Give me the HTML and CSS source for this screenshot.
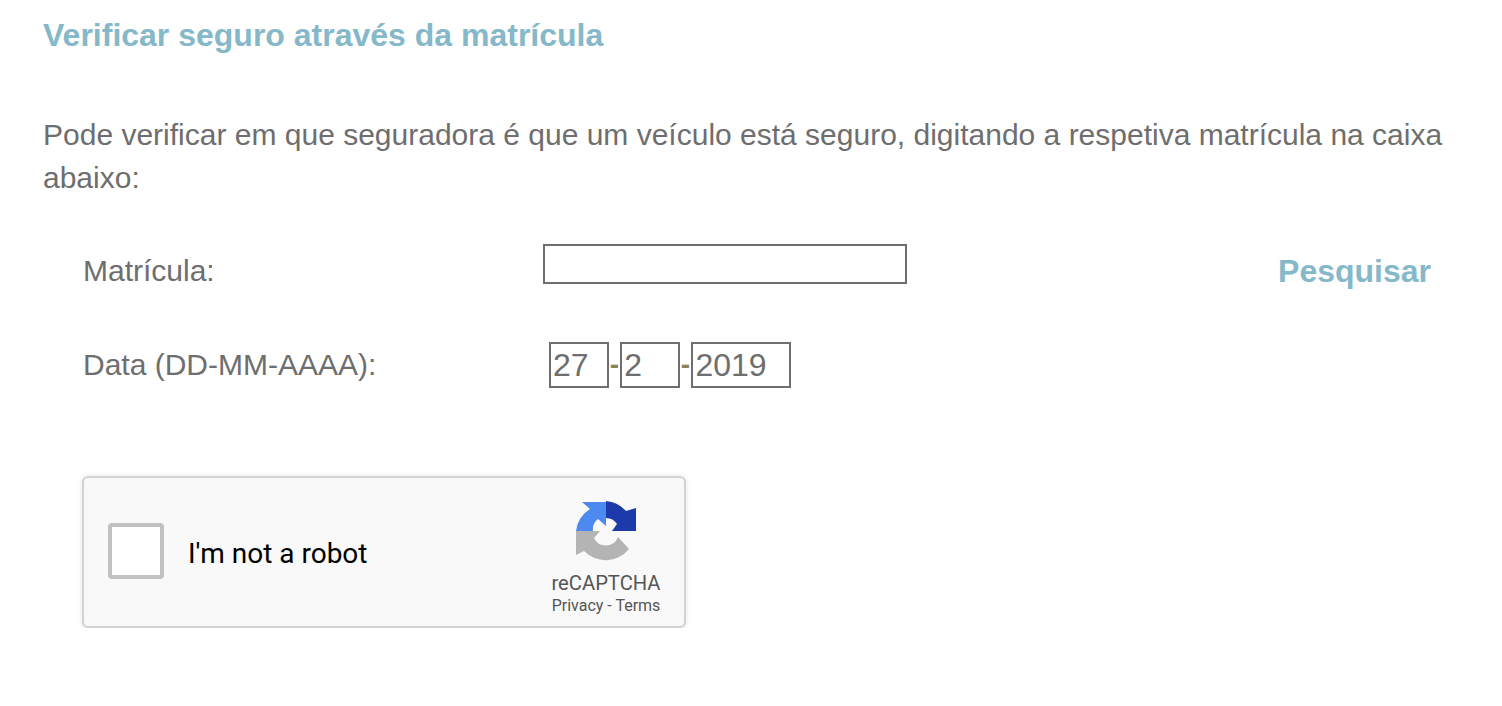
FILE: index.html
```html
<!DOCTYPE html>
<html lang="pt">
<head>
  <meta charset="UTF-8">
  <meta name="viewport" content="width=device-width, initial-scale=1.0">
  <title>Verificar seguro</title>
  <link rel="stylesheet" href="styles.css">
</head>
<body>
  <h1 class="title">Verificar seguro através da matrícula</h1>
  <p class="intro">Pode verificar em que seguradora é que um veículo está seguro, digitando a respetiva matrícula na caixa abaixo:</p>

  <div class="form">
    <div class="row row-plate">
      <label class="label">Matrícula:</label>
      <input type="text" class="plate">
      <a href="#" class="search">Pesquisar</a>
    </div>
    <div class="row row-date">
      <label class="label">Data (DD-MM-AAAA):</label>
      <div class="date">
        <input type="text" class="date-part" value="27">
        <span class="dash">-</span>
        <input type="text" class="date-part" value="2">
        <span class="dash">-</span>
        <input type="text" class="date-part year" value="2019">
      </div>
    </div>
  </div>

  <!-- reCAPTCHA -->
  <div class="captcha">
    <div class="checkbox"></div>
    <div class="captcha-text">I'm not a robot</div>
    <div class="brand">
      <svg class="logo" viewBox="0 0 61 61" width="61" height="61">
        <path fill="#b4b4b4" d="M0 30H24L18 37A13 13 0 0 0 42 36L53 48A30 30 0 0 1 8 50L0 54Z"/>
        <path fill="#4d8af0" d="M0 30A30 30 0 0 1 14 8L6 1H30V25L22 18A13 13 0 0 0 17 30Z"/>
        <path fill="#1c3aa9" d="M30 0A30 30 0 0 1 50 10L60 7V30H36L41 23A13 13 0 0 0 30 17Z"/>
      </svg>
      <div class="brand-name">reCAPTCHA</div>
      <div class="brand-links">Privacy - Terms</div>
    </div>
  </div>
</body>
</html>
```

FILE: styles.css
```css
body {
  margin: 0;
  padding: 0 43px;
  font-family: "Liberation Sans", Arial, sans-serif;
  background: #fff;
  color: #6e6e6e;
  overflow: hidden;
}
.title {
  margin: 0;
  padding-top: 17px;
  font-size: 32px;
  line-height: 36px;
  font-weight: bold;
  color: #85b8c9;
}
.intro {
  margin: 0;
  padding-top: 60px;
  font-size: 30px;
  line-height: 43px;
}
.form {
  padding: 45px 28px 0 40px;
}
.row {
  display: flex;
  align-items: center;
}
.label {
  width: 460px;
  font-size: 30px;
}
.plate {
  box-sizing: border-box;
  align-self: flex-start;
  width: 364px;
  height: 40px;
  border: 2px solid #6e6e6e;
  border-radius: 0;
  background: #fff;
  margin: 0;
  padding: 0;
}
.search {
  margin-left: auto;
  font-size: 32px;
  font-weight: bold;
  color: #85b8c9;
  text-decoration: none;
}
.row-plate {
  height: 54px;
}
.row-date {
  margin-top: 44px;
}
.date {
  display: flex;
  align-items: center;
  padding-left: 6px;
}
.date-part {
  box-sizing: border-box;
  width: 59.5px;
  height: 46px;
  border: 2px solid #6e6e6e;
  border-radius: 0;
  margin: 0;
  padding: 0 2px;
  font-family: inherit;
  font-size: 32px;
  color: #6e6e6e;
  background: #fff;
}
.year {
  width: 100px;
}
.dash {
  width: 11.7px;
  text-align: center;
  font-size: 28px;
  font-weight: bold;
  color: #8a8558;
}
.captcha {
  box-sizing: border-box;
  display: flex;
  align-items: center;
  width: 604px;
  height: 152px;
  margin: 88px 0 0 39px;
  padding: 0 24px;
  background: #f9f9f9;
  border: 2px solid #d3d3d3;
  border-radius: 6px;
  box-shadow: 0 0 4px 1px rgba(0, 0, 0, 0.08);
}
.checkbox {
  box-sizing: border-box;
  width: 56px;
  height: 56px;
  margin-bottom: 2px;
  background: #fff;
  border: 4px solid #c1c1c1;
  border-radius: 4px;
}
.captcha-text {
  margin: 2px 0 0 24px;
  font-family: Roboto, sans-serif;
  font-size: 28px;
  color: #000;
}
.brand {
  margin-left: auto;
  display: flex;
  flex-direction: column;
  align-items: center;
  width: 110px;
  margin-right: -1px;
  padding-top: 12px;
  font-family: Roboto, sans-serif;
  color: #555;
  white-space: nowrap;
}
.logo {
  display: block;
}
.brand-name {
  margin-top: 9px;
  font-size: 20.2px;
  line-height: 24px;
}
.brand-links {
  margin-top: 1px;
  font-size: 16px;
  line-height: 20px;
}
```
